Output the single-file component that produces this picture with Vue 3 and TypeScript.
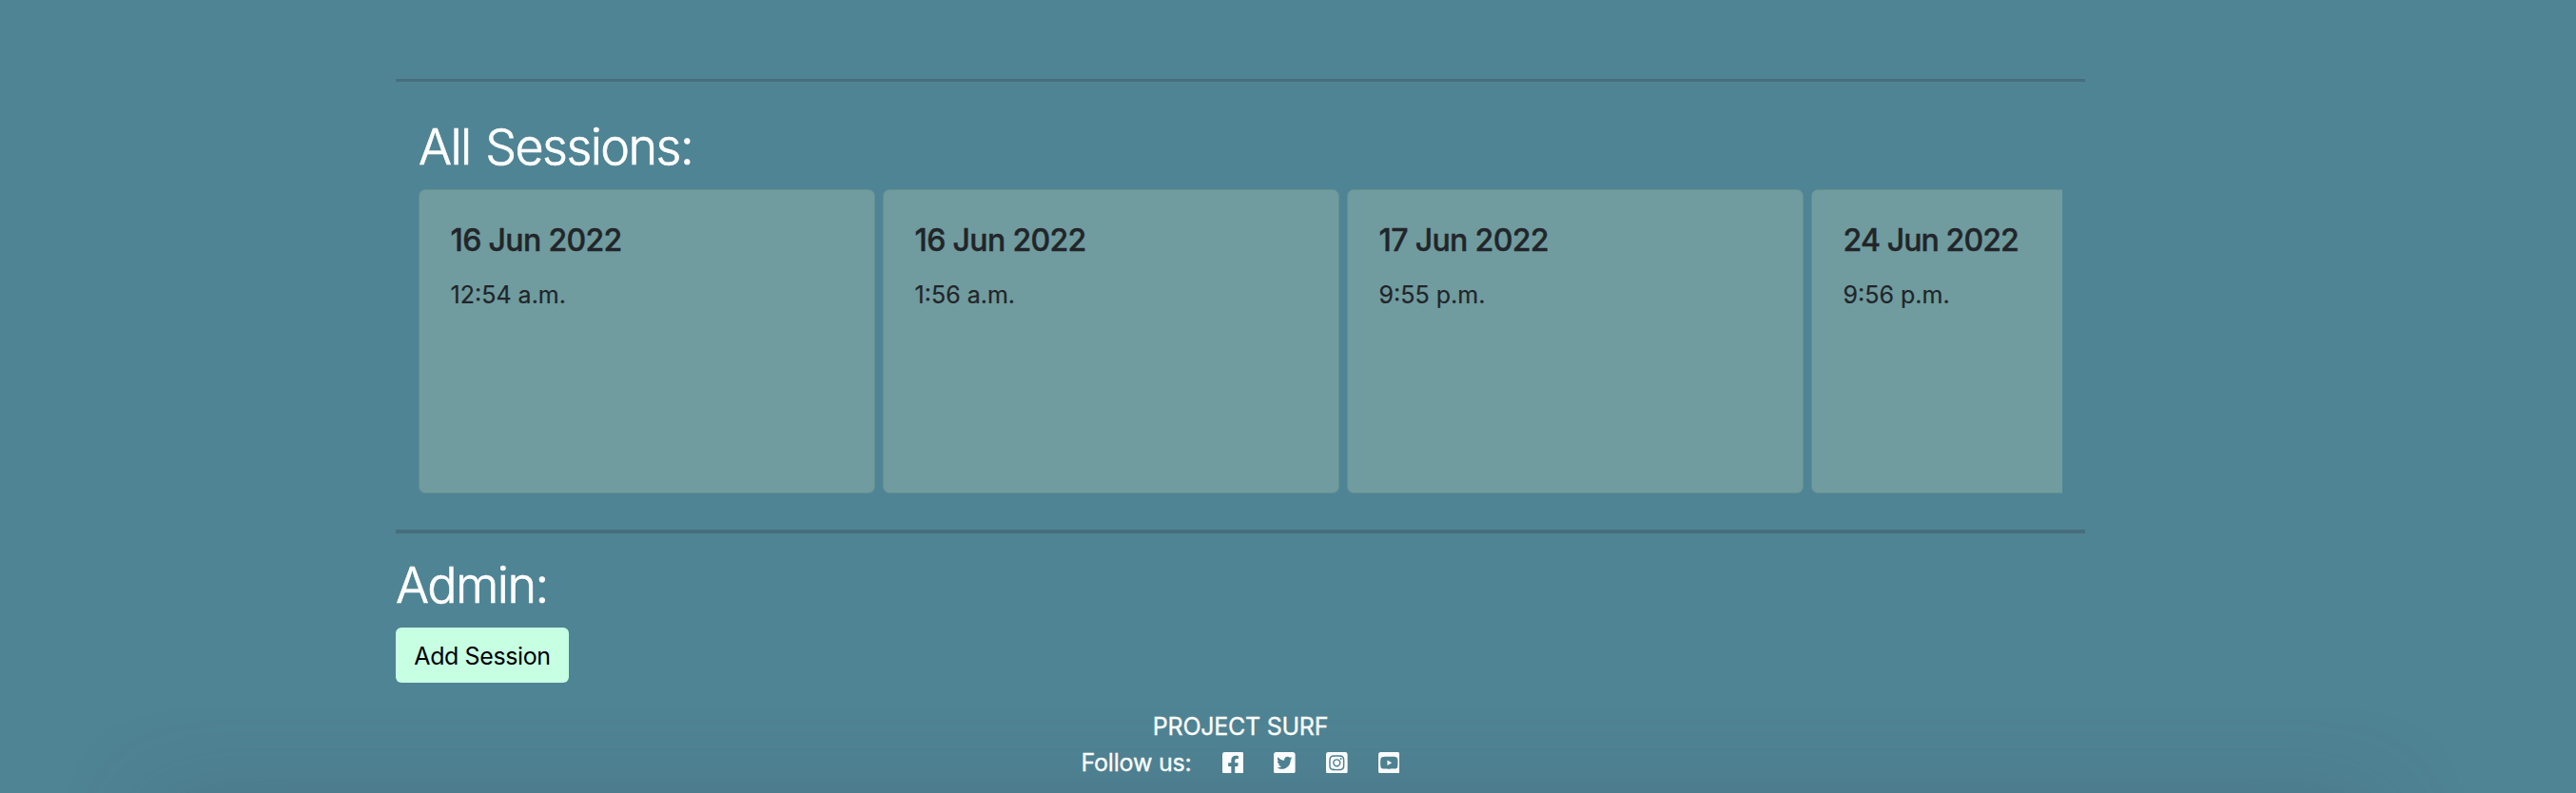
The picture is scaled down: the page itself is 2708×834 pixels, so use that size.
<script setup lang="ts">
interface Session {
  date: string
  time: string
}

interface SocialLink {
  name: string
  path: string
}

const sessions: Session[] = [
  { date: '16 Jun 2022', time: '12:54 a.m.' },
  { date: '16 Jun 2022', time: '1:56 a.m.' },
  { date: '17 Jun 2022', time: '9:55 p.m.' },
  { date: '24 Jun 2022', time: '9:56 p.m.' },
]

const socials: SocialLink[] = [
  {
    name: 'facebook',
    path: 'M400 32H48A48 48 0 0 0 0 80v352a48 48 0 0 0 48 48h137.25V327.69h-63V256h63v-54.64c0-62.15 37-96.48 93.67-96.48 27.14 0 55.52 4.84 55.52 4.84v61h-31.27c-30.81 0-40.42 19.12-40.42 38.73V256h68.78l-11 71.69h-57.78V480H400a48 48 0 0 0 48-48V80a48 48 0 0 0-48-48z',
  },
  {
    name: 'twitter',
    path: 'M400 32H48C21.5 32 0 53.5 0 80v352c0 26.5 21.5 48 48 48h352c26.5 0 48-21.5 48-48V80c0-26.5-21.5-48-48-48zm-48.9 158.8c.2 2.8.2 5.7.2 8.5 0 86.7-66 186.6-186.6 186.6-37.2 0-71.7-10.8-100.7-29.4 5.3.6 10.4.8 15.8.8 30.7 0 58.9-10.4 81.4-28-28.8-.6-53-19.5-61.3-45.5 10.1 1.5 19.2 1.5 29.6-1.2-30-6.1-52.5-32.5-52.5-64.4v-.8c8.7 4.9 18.9 7.9 29.6 8.3a65.447 65.447 0 0 1-29.2-54.6c0-12.2 3.2-23.4 8.9-33.1 32.3 39.8 80.8 65.8 135.2 68.6-9.3-44.5 24-80.6 64-80.6 18.9 0 35.9 7.9 47.9 20.7 14.8-2.8 29-8.3 41.6-15.8-4.9 15.2-15.2 28-28.8 36.1 13.2-1.4 26-5.1 37.8-10.2-8.9 13.1-20.1 24.7-32.9 34z',
  },
  {
    name: 'instagram',
    path: 'M224,202.66A53.34,53.34,0,1,0,277.36,256,53.38,53.38,0,0,0,224,202.66Zm124.71-41a54,54,0,0,0-30.41-30.41c-21-8.29-71-6.43-94.3-6.43s-73.25-1.93-94.31,6.43a54,54,0,0,0-30.41,30.41c-8.28,21-6.43,71.05-6.43,94.33S91,329.26,99.32,350.33a54,54,0,0,0,30.41,30.41c21,8.29,71,6.43,94.31,6.43s73.24,1.93,94.3-6.43a54,54,0,0,0,30.41-30.41c8.35-21,6.43-71.05,6.43-94.33S357.1,182.74,348.75,161.67ZM224,338a82,82,0,1,1,82-82A81.9,81.9,0,0,1,224,338Zm85.38-148.3a19.14,19.14,0,1,1,19.13-19.14A19.1,19.1,0,0,1,309.42,189.74ZM400,32H48A48,48,0,0,0,0,80V432a48,48,0,0,0,48,48H400a48,48,0,0,0,48-48V80A48,48,0,0,0,400,32ZM382.88,322c-1.29,25.63-7.14,48.34-25.85,67s-41.4,24.63-67,25.85c-26.41,1.49-105.59,1.49-132,0-25.63-1.29-48.26-7.15-67-25.85s-24.63-41.42-25.85-67c-1.49-26.42-1.49-105.61,0-132,1.29-25.63,7.07-48.34,25.85-67s41.47-24.56,67-25.78c26.41-1.49,105.59-1.49,132,0,25.63,1.29,48.33,7.15,67,25.85s24.63,41.42,25.85,67.05C384.37,216.44,384.37,295.56,382.88,322Z',
  },
  {
    name: 'youtube',
    path: 'M186.8 202.1l95.2 54.1-95.2 54.1V202.1zM448 80v352c0 26.5-21.5 48-48 48H48c-26.5 0-48-21.5-48-48V80c0-26.5 21.5-48 48-48h352c26.5 0 48 21.5 48 48zm-42 176.3s0-59.6-7.6-88.2c-4.2-15.8-16.5-28.2-32.2-32.4C337.9 128 224 128 224 128s-113.9 0-142.2 7.7c-15.7 4.2-28 16.6-32.2 32.4-7.6 28.5-7.6 88.2-7.6 88.2s0 59.6 7.6 88.2c4.2 15.8 16.5 27.7 32.2 31.9C110.1 384 224 384 224 384s113.9 0 142.2-7.7c15.7-4.2 28-16.1 32.2-31.9 7.6-28.5 7.6-88.1 7.6-88.1z',
  },
]
</script>

<template>
  <div class="page">
    <div class="shade"></div>
    <main class="container">
      <hr class="rule" />
      <section class="sessions">
        <h2 class="title">All Sessions:</h2>
        <div class="strip">
          <article v-for="(s, i) in sessions" :key="i" class="card">
            <h5 class="date">{{ s.date }}</h5>
            <p class="time">{{ s.time }}</p>
          </article>
        </div>
      </section>
      <hr class="rule thick" />
      <section class="admin">
        <h2 class="title">Admin:</h2>
        <button class="add" type="button">Add Session</button>
      </section>
      <footer class="footer">
        <div class="brand">PROJECT SURF</div>
        <div class="follow">
          <span class="label">Follow us:</span>
          <a v-for="s in socials" :key="s.name" class="social" :aria-label="s.name">
            <svg viewBox="0 32 448 448"><path :d="s.path" /></svg>
          </a>
        </div>
      </footer>
    </main>
  </div>
</template>

<style>
body {
  margin: 0;
  background: #4f8494;
}
</style>

<style scoped>
.page {
  position: relative;
  box-sizing: border-box;
  height: 834px;
  padding-top: 83px;
  overflow: hidden;
  background: #4f8494;
  color: #fff;
  font: 400 25px/38px Inter, 'Liberation Sans', sans-serif;
}
.container {
  position: relative;
  width: 1776px;
  margin-left: 416px;
}
.rule {
  height: 3px;
  margin: 0;
  border: 0;
  background: #466e7d;
}
.rule.thick {
  height: 4px;
  margin-top: 38px;
}
.sessions {
  padding: 38px 24px 0;
}
.title {
  margin: 0;
  font-size: 52px;
  font-weight: 300;
  line-height: 62px;
  letter-spacing: -1.55px;
  word-spacing: 2.5px;
  -webkit-text-stroke: 0.7px #fff;
}
.strip {
  display: flex;
  gap: 8px;
  margin-top: 13px;
  overflow: hidden;
}
.card {
  flex: 0 0 480px;
  box-sizing: border-box;
  height: 320px;
  padding: 33px 32.6px;
  border: 1px solid #648f92;
  border-radius: 7px;
  background: #709c9f;
  color: #212529;
}
.date {
  margin: 0;
  font-size: 32px;
  font-weight: 500;
  line-height: 40px;
  letter-spacing: -0.65px;
  -webkit-text-stroke: 0.4px #212529;
}
.card:last-child .date {
  letter-spacing: -0.88px;
}
.time {
  margin: 18px 0 0;
  -webkit-text-stroke: 0.2px #212529;
}
.admin {
  padding-top: 24px;
}
.admin .title {
  margin-bottom: 13px;
}
.add {
  display: block;
  width: 182px;
  height: 58px;
  padding: 2px 0 0;
  border: 0;
  border-radius: 6px;
  background: #c7ffe3;
  color: #000;
  font: inherit;
  letter-spacing: -0.4px;
  white-space: nowrap;
}
.footer {
  padding-top: 27px;
  -webkit-text-stroke: 0.3px #fff;
}
.brand {
  text-align: center;
  letter-spacing: -0.26px;
}
.follow {
  display: flex;
  align-items: center;
  padding-left: 720.5px;
}
.label {
  width: 148px;
  letter-spacing: -0.2px;
}
.social {
  display: flex;
  width: 54.8px;
}
.social svg {
  width: 22.6px;
  height: 22.6px;
  fill: #fbfcfd;
  stroke: none;
}
.shade {
  position: absolute;
  top: 850px;
  left: 170px;
  width: 2320px;
  height: 200px;
  border-radius: 20px;
  box-shadow: 0 0 90px rgba(65, 90, 115, 0.5);
}
</style>
